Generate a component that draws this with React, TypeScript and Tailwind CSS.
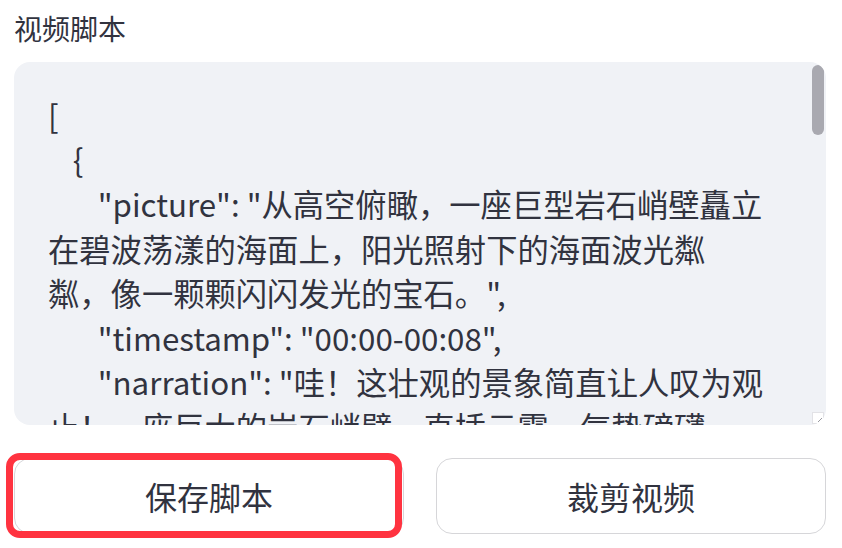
import React from "react";

type Line = { indent: string; text: string };

const lines: Line[] = [
  { indent: "", text: "[" },
  { indent: "    ", text: "{" },
  { indent: "        ", text: "\"picture\": \"从高空俯瞰，一座巨型岩石峭壁矗立" },
  { indent: "", text: "在碧波荡漾的海面上，阳光照射下的海面波光粼" },
  { indent: "", text: "粼，像一颗颗闪闪发光的宝石。\"," },
  { indent: "        ", text: "\"timestamp\": \"00:00-00:08\"," },
  { indent: "        ", text: "\"narration\": \"哇！这壮观的景象简直让人叹为观" },
  { indent: "", text: "止！一座巨大的岩石峭壁，直插云霄，气势磅礴" },
];

function ResizeGrip() {
  return (
    <svg width="12" height="12" viewBox="0 0 12 12" className="absolute right-[2px] bottom-[1px]">
      <rect x="0.5" y="0.5" width="11" height="11" fill="#ffffff" stroke="#e2e2e6" />
      <path d="M10 6 L6 10" stroke="#9a9aa0" strokeWidth="1" />
    </svg>
  );
}

export default function App() {
  return (
    <div className="relative w-[842px] h-[548px] overflow-hidden bg-white text-[#31333f] font-['Noto_Sans_CJK_SC',sans-serif]">
      <div className="pl-[14px] pr-[16px] pt-[6px]">
        <div className="text-[28px] leading-[1.6] mb-[11px]">视频脚本</div>

        <div className="relative h-[363px] rounded-2xl bg-[#f0f2f6] overflow-hidden">
          <div className="pl-[34px] pt-[31px] text-[31.3px] leading-[44.6px] whitespace-pre">
            {lines.map((l, i) => (
              <div key={i}>
                {l.indent && <span className="tracking-[-0.8px]">{l.indent}</span>}
                {l.text}
              </div>
            ))}
          </div>
          <div className="absolute right-[2px] top-[3px] w-[12px] h-[70px] rounded-full bg-[#a9a9b0]" />
          <ResizeGrip />
        </div>

        <div className="grid grid-cols-2 gap-[32px] mt-[33px]">
          <button className="h-[76px] rounded-2xl border border-[#d6d6d9] bg-white text-[32px]">
            保存脚本
          </button>
          <button className="h-[76px] rounded-2xl border border-[#d6d6d9] bg-white text-[32px]">
            裁剪视频
          </button>
        </div>
      </div>

      {/* highlight around the save button */}
      <div className="absolute left-[6px] top-[453px] w-[396px] h-[85px] rounded-[14px] border-[7px] border-[#ff3340]" />
    </div>
  );
}
